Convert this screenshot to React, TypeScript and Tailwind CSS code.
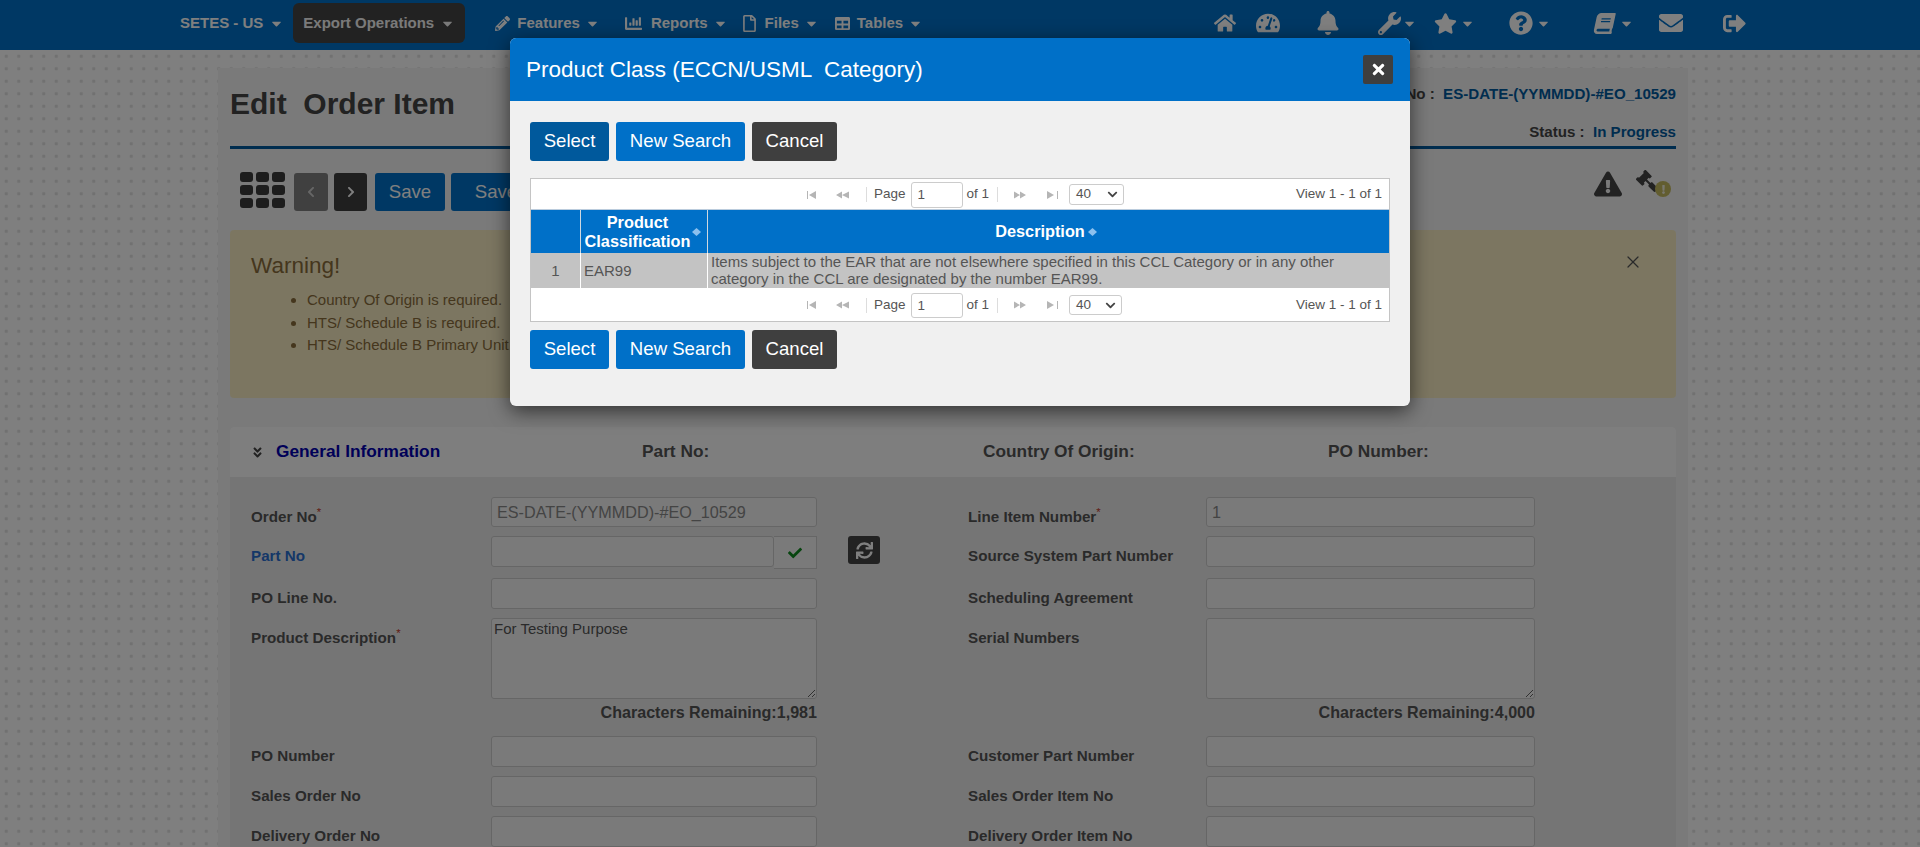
import type { ReactNode } from "react";
import { X } from "lucide-react";
import {
  FaBell,
  FaBook,
  FaCaretDown,
  FaChartBar,
  FaCheck,
  FaChevronDown,
  FaChevronLeft,
  FaChevronRight,
  FaEnvelope,
  FaExclamation,
  FaExclamationTriangle,
  FaGavel,
  FaHome,
  FaPencilAlt,
  FaQuestionCircle,
  FaRegFile,
  FaSignOutAlt,
  FaStar,
  FaSync,
  FaTable,
  FaTachometerAlt,
  FaTimes,
  FaWrench,
  FaAngleDoubleDown,
} from "react-icons/fa";

const Caret = ({ className = "" }: { className?: string }) => (
  <FaCaretDown size={15} className={`shrink-0 ${className}`} />
);

const NavItem = ({ icon, label, className = "", gap = "ml-[7px]" }: { icon: ReactNode; label: string; className?: string; gap?: string }) => (
  <div className={`flex items-center ${className}`}>
    {icon}
    <span className={gap}>{label}</span>
    <Caret className="ml-[5px]" />
  </div>
);

const Navbar = () => (
  <nav className="flex h-[50px] items-center bg-[#0070c8] pb-1 pl-[180px] text-[15px] font-bold text-white">
    <span>SETES - US</span>
    <Caret className="ml-[6px]" />
    <div className="ml-[9px] flex h-10 w-[172px] items-center rounded-md bg-[#444] pl-[10px] text-[#f5f5f5]">
      Export Operations
      <Caret className="ml-[6px]" />
    </div>
    <NavItem className="ml-[30px]" icon={<FaPencilAlt size={15} />} label="Features" />
    <NavItem className="ml-[25px]" gap="ml-[9px]" icon={<FaChartBar size={17} />} label="Reports" />
    <NavItem className="ml-[13px]" icon={<FaRegFile size={17} />} label="Files" />
    <NavItem className="ml-[16px]" icon={<FaTable size={15} />} label="Tables" />
    <div className="ml-[291px] flex items-center">
      <FaHome size={22} />
      <FaTachometerAlt size={24} className="ml-[20px]" />
      <FaBell size={24} className="ml-[36px]" />
      <FaWrench size={23} className="ml-[38px]" />
      <Caret className="ml-[1px]" />
      <FaStar size={23} className="ml-[17px]" />
      <Caret className="ml-[3px]" />
      <FaQuestionCircle size={24} className="ml-[34px]" />
      <Caret className="ml-[3px]" />
      <FaBook size={21} className="ml-[43px] -skew-x-12" />
      <Caret className="ml-[4px]" />
      <FaEnvelope size={24} className="ml-[25px]" />
      <FaSignOutAlt size={23} className="ml-[40px]" />
    </div>
  </nav>
);

const ToolButton = ({ children, className }: { children: ReactNode; className: string }) => (
  <div className={`flex h-[38px] items-center justify-center rounded-[3px] text-white ${className}`}>{children}</div>
);

const Toolbar = () => (
  <div className="mt-[24px] flex items-start">
    <div className="ml-[10px] mt-[-1px] grid grid-cols-3 gap-x-[3px] gap-y-[3px]">
      {[0, 1, 2, 3, 4, 5, 6, 7, 8].map((i) => (
        <span key={i} className="h-[10px] w-[13px] rounded-[3px] bg-[#3a3a3a]" />
      ))}
    </div>
    <ToolButton className="ml-[9px] w-[34px] bg-[#818181]">
      <FaChevronLeft size={12} className="text-white/60" />
    </ToolButton>
    <ToolButton className="ml-[6px] w-[33px] bg-[#3f3f3f]">
      <FaChevronRight size={12} />
    </ToolButton>
    <ToolButton className="ml-[8px] w-[70px] bg-[#0070c8] text-[18.6px]">Save</ToolButton>
    <ToolButton className="ml-[6px] w-[90px] bg-[#0070c8] text-[18.6px]">Save</ToolButton>
    <div className="ml-auto mr-[6px] flex items-start">
      <FaExclamationTriangle size={28} className="mt-[-3px] text-[#444]" />
      <div className="relative ml-[14px] h-[26px] w-[34px]">
        <FaGavel size={22} className="mt-[-3px] -scale-x-100 text-[#444]" />
        <span className="absolute left-[19px] top-[8px] flex h-4 w-4 items-center justify-center rounded-full bg-[#c4ba60]">
          <FaExclamation size={9} className="text-white/80" />
        </span>
      </div>
    </div>
  </div>
);

const Warning = () => (
  <div className="relative mt-[19px] h-[168px] rounded bg-[#f8edc3] pl-[21px] pt-[23px] text-[#8a6d3b]">
    <h4 className="text-[22.5px] leading-[26px]">Warning!</h4>
    <ul className="ml-[56px] mt-[10px] list-disc text-[15px] leading-[22.5px]">
      <li>Country Of Origin is required.</li>
      <li>HTS/ Schedule B is required.</li>
      <li>HTS/ Schedule B Primary Unit is required.</li>
    </ul>
    <X size={20} strokeWidth={1.5} className="absolute right-[33px] top-[22px] text-[#555]" />
  </div>
);

const inputBase = "block rounded-[3px] border border-[#ccc] bg-[#f5f5f5] outline-none";

const Field = ({ value, disabled }: { value?: string; disabled?: boolean }) => (
  <input
    readOnly
    defaultValue={value}
    className={`${inputBase} w-full px-[5px] text-[16.2px] ${disabled ? "h-[30px] bg-[#dfe1e6] text-[#888]" : "h-[31px]"}`}
  />
);

const Label = ({ text, required, blue }: { text: string; required?: boolean; blue?: boolean }) => (
  <label className={`mt-[9px] block text-[15.2px] font-bold leading-[21px] ${blue ? "text-[#2a6fd0]" : "text-[#555]"}`}>
    {text}
    {required && <sup className="font-normal text-[#c0392b]">*</sup>}
  </label>
);

const Row = ({ left, leftField, right, rightField, middle }: {
  left: ReactNode;
  leftField: ReactNode;
  right: ReactNode;
  rightField: ReactNode;
  middle?: ReactNode;
}) => (
  <div className="mb-[9px] grid grid-cols-[240px_326px_151px_238px_329px] pl-[21px]">
    {left}
    {leftField}
    <div className="pl-[31px]">{middle}</div>
    {right}
    {rightField}
  </div>
);

const Remaining = ({ text }: { text: string }) => (
  <div className="mt-[3px] h-[25px] text-right text-[16.1px] font-bold leading-5 text-[#555]">{text}</div>
);

const GeneralCard = () => (
  <div className="mt-[29px] rounded-t bg-[#ebebeb]">
    <div className="relative flex h-[50px] items-center rounded-t bg-[#fdfdfd] pl-[21px] text-[17.3px] font-bold text-[#555]">
      <FaAngleDoubleDown size={13} className="text-[#444]" />
      <span className="ml-[12px] w-[366px] text-[#0000b0]">General Information</span>
      <span className="w-[341px]">Part No:</span>
      <span className="w-[345px]">Country Of Origin:</span>
      <span>PO Number:</span>
    </div>
    <div className="pt-[20px]">
      <Row
        left={<Label text="Order No" required />}
        leftField={<Field value="ES-DATE-(YYMMDD)-#EO_10529" disabled />}
        right={<Label text="Line Item Number" required />}
        rightField={<Field value="1" disabled />}
      />
      <Row
        left={<Label text="Part No" blue />}
        leftField={
          <div className="flex h-[33px] items-start">
            <div className="grow"><Field /></div>
            <div className="flex h-[33px] w-[43px] items-center justify-center border border-l-0 border-[#ccc] bg-[#f5f5f5]">
              <FaCheck size={14} className="text-[#0f8a1f]" />
            </div>
          </div>
        }
        middle={
          <div className="flex h-7 w-8 items-center justify-center rounded-[3px] bg-[#444]">
            <FaSync size={17} className="text-white" />
          </div>
        }
        right={<Label text="Source System Part Number" />}
        rightField={<Field />}
      />
      <Row
        left={<Label text="PO Line No." />}
        leftField={<Field />}
        right={<Label text="Scheduling Agreement" />}
        rightField={<Field />}
      />
      <Row
        left={<Label text="Product Description" required />}
        leftField={
          <div>
            <textarea
              readOnly
              defaultValue="For Testing Purpose"
              className={`${inputBase} h-[81px] w-full px-[2px] text-[15px] leading-5 text-[#555]`}
            />
            <Remaining text="Characters Remaining:1,981" />
          </div>
        }
        right={<Label text="Serial Numbers" />}
        rightField={
          <div>
            <textarea readOnly className={`${inputBase} h-[81px] w-full`} />
            <Remaining text="Characters Remaining:4,000" />
          </div>
        }
      />
      <Row
        left={<Label text="PO Number" />}
        leftField={<Field />}
        right={<Label text="Customer Part Number" />}
        rightField={<Field />}
      />
      <Row
        left={<Label text="Sales Order No" />}
        leftField={<Field />}
        right={<Label text="Sales Order Item No" />}
        rightField={<Field />}
      />
      <Row
        left={<Label text="Delivery Order No" />}
        leftField={<Field />}
        right={<Label text="Delivery Order Item No" />}
        rightField={<Field />}
      />
    </div>
  </div>
);

const Page = () => (
  <div className="h-[797px] overflow-hidden bg-white bg-[radial-gradient(circle,#e2e2e2_1.5px,transparent_2px)] bg-[size:12.5px_12.5px] pl-[218px]">
    <div className="h-full w-[1470px] pt-[18px]">
      <div className="h-full bg-[#f4f4f4] px-3 pt-[1px]">
        <div className="flex h-[80px] justify-between border-b-[3px] border-[#005a9e]">
          <h1 className="mt-[17px] whitespace-pre text-[30px] font-bold leading-9 text-[#444]">Edit  Order Item</h1>
          <div className="mt-[14px] text-right text-[15.1px] font-bold text-[#444]">
            <div>No :&nbsp; <span className="text-[#005a9e]">ES-DATE-(YYMMDD)-#EO_10529</span></div>
            <div className="mt-[15px]">Status :&nbsp; <span className="text-[#005a9e]">In Progress</span></div>
          </div>
        </div>
        <Toolbar />
        <Warning />
        <GeneralCard />
      </div>
    </div>
  </div>
);

const PagerGlyph = ({ d }: { d: string }) => (
  <svg width="14" height="8" viewBox="0 0 14 8" className="text-[#b5b5b5]" fill="currentColor">
    <path d={d} />
  </svg>
);

const Pager = ({ inputH, selectH, selectW, top }: { inputH: string; selectH: string; selectW: string; top: string }) => (
  <div className={`relative flex items-center bg-white pt-px text-[13.5px] text-[#555] ${top}`}>
    <div className="ml-[275px] flex items-center">
      <PagerGlyph d="M1 0h1v8H1zM3 4l7-4v8z" />
      <span className="w-4" />
      <PagerGlyph d="M0 4l6-3.5v7zM6 4l7-3.5v7z" />
      <span className="ml-[16px] h-[15px] w-px bg-[#ddd]" />
      <span className="ml-[7px]">Page</span>
      <input
        readOnly
        defaultValue="1"
        className={`ml-[5px] w-[52px] rounded-[3px] border border-[#ccc] bg-white px-[6px] outline-none ${inputH}`}
      />
      <span className="ml-1">of 1</span>
      <span className="ml-2 h-[15px] w-px bg-[#ddd]" />
      <span className="w-[15px]" />
      <PagerGlyph d="M1 .5l6 3.5-6 3.5zM7 .5l6 3.5-6 3.5z" />
      <span className="w-[19px]" />
      <PagerGlyph d="M1 0l7 4-7 4zM11 0h1v8h-1z" />
      <div className={`ml-[9px] flex items-center justify-between rounded-[3px] border border-[#ccc] pl-[6px] pr-[5px] ${selectH} ${selectW}`}>
        40
        <FaChevronDown size={11} className="text-[#444]" />
      </div>
    </div>
    <span className="ml-auto mr-[7px]">View 1 - 1 of 1</span>
  </div>
);

const SortMark = () => (
  <svg width="9" height="8" viewBox="0 0 9 8" className="shrink-0 text-[#8cc0ee]" fill="currentColor">
    <path d="M4.5 0l4.5 4-4.5 4L0 4z" />
  </svg>
);

const Grid = () => (
  <div className="mt-[17px] border border-[#c4c4c4] bg-white">
    <Pager top="h-[30px]" inputH="h-[26px]" selectH="h-[21px]" selectW="w-[55px]" />
    <div className="grid h-[44px] grid-cols-[50px_127px_680px] border-t border-[#bcd] bg-[#0070c8] text-[16.3px] font-bold leading-[19px] text-white">
      <div className="border-r border-[#cfd8e0]" />
      <div className="flex items-center justify-center border-r border-[#cfd8e0] pr-[2px]">
        <span className="text-center">Product<br />Classification</span>
        <span className="ml-[2px]"><SortMark /></span>
      </div>
      <div className="flex items-center justify-center pr-[4px]">
        Description
        <span className="ml-[3px]"><SortMark /></span>
      </div>
    </div>
    <div className="grid h-[35px] grid-cols-[50px_127px_680px] bg-[#c3c3c3] text-[15px] leading-[17px] text-[#555]">
      <div className="flex items-center justify-center border-r border-white">1</div>
      <div className="flex items-center border-r border-white pl-[3px]">EAR99</div>
      <div className="pl-[3px]">
        Items subject to the EAR that are not elsewhere specified in this CCL Category or in any other
        <br />
        category in the CCL are designated by the number EAR99.
      </div>
    </div>
    <Pager top="h-[33px]" inputH="h-[25px]" selectH="h-[20px]" selectW="w-[53px]" />
  </div>
);

const ModalButton = ({ children, className }: { children: ReactNode; className: string }) => (
  <button className={`h-[39px] rounded-[3px] pb-[2px] text-[18.6px] text-white ${className}`}>{children}</button>
);

const Modal = () => (
  <div className="absolute left-[510px] top-[38px] h-[368px] w-[900px] overflow-hidden rounded-md bg-[#f0f0f0] shadow-[0_5px_20px_rgba(0,0,0,0.6)]">
    <div className="flex h-[63px] items-center justify-between bg-[#0070c8] pl-4 pr-[17px] text-white">
      <h2 className="whitespace-pre text-[22.5px]">Product Class (ECCN/USML  Category)</h2>
      <div className="flex h-[29px] w-[30px] items-center justify-center rounded-[2px] bg-[#3f3f3f]">
        <FaTimes size={17} />
      </div>
    </div>
    <div className="px-5 pt-[21px]">
      <div className="flex gap-[7px]">
        <ModalButton className="w-[79px] bg-[#00599c]">Select</ModalButton>
        <ModalButton className="w-[129px] bg-[#0070c8]">New Search</ModalButton>
        <ModalButton className="w-[85px] bg-[#3f3f3f]">Cancel</ModalButton>
      </div>
      <Grid />
      <div className="mt-2 flex gap-[7px]">
        <ModalButton className="w-[79px] bg-[#0070c8]">Select</ModalButton>
        <ModalButton className="w-[129px] bg-[#0070c8]">New Search</ModalButton>
        <ModalButton className="w-[85px] bg-[#3f3f3f]">Cancel</ModalButton>
      </div>
    </div>
  </div>
);

export default function App() {
  return (
    <div className="relative h-[847px] overflow-hidden font-['Liberation_Sans',Arial,sans-serif]">
      <Navbar />
      <Page />
      <div className="absolute inset-0 bg-black/50" />
      <Modal />
    </div>
  );
}
